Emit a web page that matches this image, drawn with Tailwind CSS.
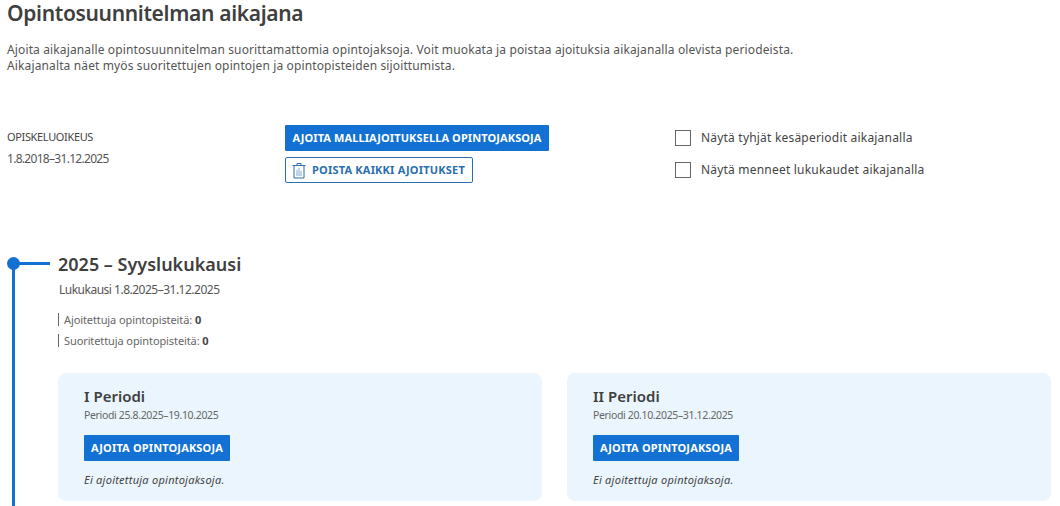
<!DOCTYPE html>
<html lang="fi">
<head>
  <meta charset="UTF-8">
  <title>Opintosuunnitelman aikajana</title>
  <script src="https://cdn.jsdelivr.net/npm/@tailwindcss/browser@4"></script>
</head>
<body class="bg-white text-[#444444] font-['Noto_Sans',sans-serif] h-[506px] overflow-hidden">

  <div class="pl-[7px] pr-[9px]">
    <h1 class="text-[21px] leading-[26px] font-semibold tracking-[-0.33px] text-[#3f3f3f]">Opintosuunnitelman aikajana</h1>
    <p class="mt-[16px] text-[12px] leading-[16px] tracking-[0.13px] text-[#555555]">
      Ajoita aikajanalle opintosuunnitelman suorittamattomia opintojaksoja. Voit muokata ja poistaa ajoituksia aikajanalla olevista periodeista.<br>
      Aikajanalta näet myös suoritettujen opintojen ja opintopisteiden sijoittumista.
    </p>

    <div class="mt-[51px] flex">
      <div class="w-[278px] pt-[4px]">
        <div class="text-[11px] leading-[16px] tracking-[-0.35px]">OPISKELUOIKEUS</div>
        <div class="mt-[6px] text-[12px] leading-[16px] tracking-[-0.7px] text-[#555555]">1.8.2018–31.12.2025</div>
      </div>
      <div class="w-[390px] flex flex-col items-start gap-[6px]">
        <button class="h-[26px] w-[264px] bg-[#1271d3] rounded-[1px] text-white text-[11px] font-bold tracking-[0.1px] whitespace-nowrap">AJOITA MALLIAJOITUKSELLA OPINTOJAKSOJA</button>
        <button class="h-[26px] w-[188px] border border-[#2a6fae] rounded-[2px] flex items-center gap-[6px] pl-[6px] text-[#2a6fae] text-[11px] font-bold tracking-[0.2px] whitespace-nowrap">
          <svg class="w-[14px] h-[17px]" viewBox="0 0 14 17" fill="none" stroke="#2a6fae" stroke-width="1">
            <path d="M0.5 3.5h13M2 3.5v12.5h10V3.5M5 3.5V1.5h4v2"/>
            <path stroke="#7fa9cf" d="M5 8v6M7 6v8M9 9v5"/>
          </svg>
          POISTA KAIKKI AJOITUKSET
        </button>
      </div>
      <div class="pt-[5px] flex flex-col gap-[16px]">
        <label class="flex items-center gap-[10px] text-[12px] leading-[16px] tracking-[0.2px]">
          <span class="w-[16px] h-[16px] border border-[#666666]"></span>
          Näytä tyhjät kesäperiodit aikajanalla
        </label>
        <label class="flex items-center gap-[10px] text-[12px] leading-[16px] tracking-[0.2px]">
          <span class="w-[16px] h-[16px] border border-[#666666]"></span>
          Näytä menneet lukukaudet aikajanalla
        </label>
      </div>
    </div>
  </div>

  <div class="relative mt-[68px] pl-[58px] pr-[9px]">
    <!-- timeline marker -->
    <div class="absolute left-[7px] top-[6px] w-[13px] h-[13px] rounded-full bg-[#1271d3]"></div>
    <div class="absolute left-[12px] top-[11px] w-[38px] h-[3px] bg-[#1271d3]"></div>
    <div class="absolute left-[12px] top-[12px] w-[3px] h-[243px] bg-[#1271d3]"></div>

    <h2 class="text-[18px] leading-[26px] font-semibold text-[#3f3f3f]">2025 – Syyslukukausi</h2>
    <div class="mt-[5px] pl-[1px] text-[12px] leading-[16px] tracking-[-0.5px] text-[#555555]">Lukukausi 1.8.2025–31.12.2025</div>

    <div class="mt-[15px] flex flex-col gap-[8px] text-[11px] leading-[13px] tracking-[-0.1px] text-[#666666]">
      <div class="border-l border-[#666666] pl-[5px]">Ajoitettuja opintopisteitä: <b class="text-[#444444]">0</b></div>
      <div class="border-l border-[#666666] pl-[5px]">Suoritettuja opintopisteitä: <b class="text-[#444444]">0</b></div>
    </div>

    <div class="mt-[26px] grid grid-cols-2 gap-[25px]">
      <div class="h-[128px] bg-[#eaf5fd] rounded-[8px] pl-[26px] pt-[14px]">
        <h3 class="text-[15px] leading-[18px] font-semibold text-[#3f3f3f]">I Periodi</h3>
        <div class="mt-[3px] text-[10.5px] leading-[14px] tracking-[-0.35px] text-[#666666]">Periodi 25.8.2025–19.10.2025</div>
        <button class="mt-[13px] h-[26px] w-[146px] bg-[#1271d3] rounded-[1px] text-white text-[11px] font-bold tracking-[0.15px]">AJOITA OPINTOJAKSOJA</button>
        <p class="mt-[11px] text-[11px] leading-[16px] tracking-[0.25px] italic">Ei ajoitettuja opintojaksoja.</p>
      </div>
      <div class="h-[128px] bg-[#eaf5fd] rounded-[8px] pl-[26px] pt-[14px]">
        <h3 class="text-[15px] leading-[18px] font-semibold text-[#3f3f3f]">II Periodi</h3>
        <div class="mt-[3px] text-[10.5px] leading-[14px] tracking-[-0.35px] text-[#666666]">Periodi 20.10.2025–31.12.2025</div>
        <button class="mt-[13px] h-[26px] w-[146px] bg-[#1271d3] rounded-[1px] text-white text-[11px] font-bold tracking-[0.15px]">AJOITA OPINTOJAKSOJA</button>
        <p class="mt-[11px] text-[11px] leading-[16px] tracking-[0.25px] italic">Ei ajoitettuja opintojaksoja.</p>
      </div>
    </div>
  </div>

</body>
</html>
